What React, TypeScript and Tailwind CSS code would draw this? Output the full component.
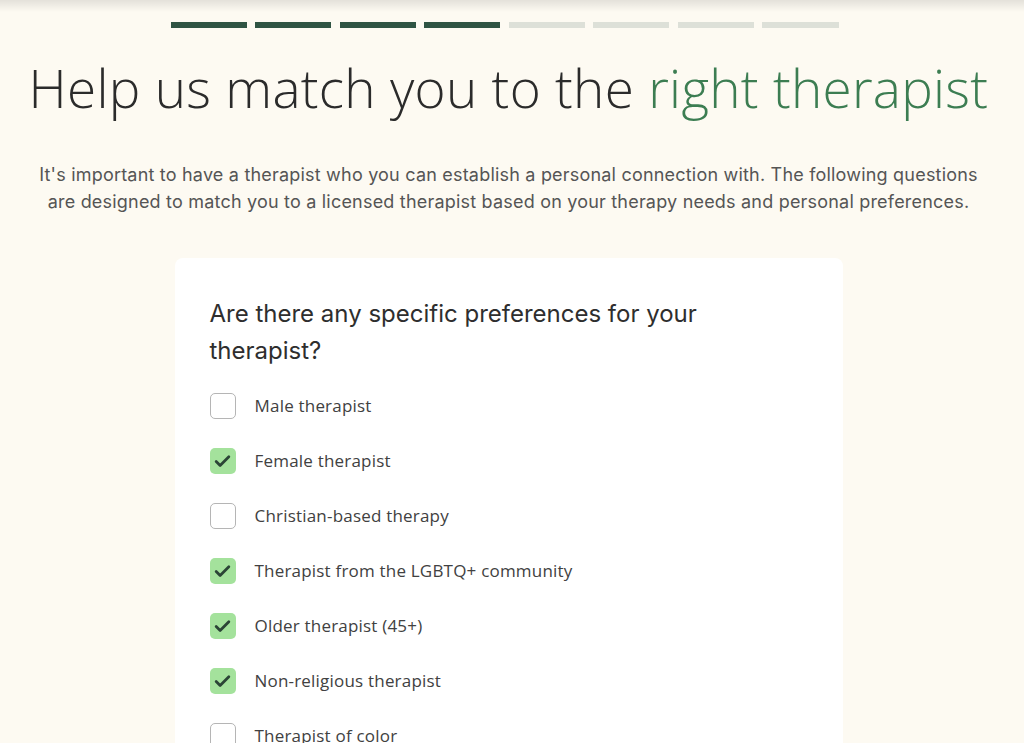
import React, { useState } from 'react';
import { Check } from 'lucide-react';

const options = [
  { label: 'Male therapist', checked: false },
  { label: 'Female therapist', checked: true },
  { label: 'Christian-based therapy', checked: false },
  { label: 'Therapist from the LGBTQ+ community', checked: true },
  { label: 'Older therapist (45+)', checked: true },
  { label: 'Non-religious therapist', checked: true },
  { label: 'Therapist of color', checked: false },
];

const App = () => {
  const [selected, setSelected] = useState(options.map((o) => o.checked));
  const step = 4;

  return (
    <div className="h-screen bg-[#fdfaf2] relative overflow-hidden">
      {/* header shadow */}
      <div className="absolute inset-x-0 top-0 h-3 bg-gradient-to-b from-black/10 to-transparent" />

      <div className="w-[1017px] flex flex-col items-center pt-[22px]">
        {/* Progress */}
        <div className="flex gap-[8.5px] w-[668px] -ml-[8px]">
          {Array.from({ length: 8 }).map((_, i) => (
            <div
              key={i}
              className={`flex-1 h-[6px] ${i < step ? 'bg-[#2f5443]' : 'bg-[#dde0d8]'}`}
            />
          ))}
        </div>

        <h1 className="mt-[28px] text-[53px] leading-[64px] font-light text-[#2b2b2b] tracking-[0.3px] font-['Open_Sans',sans-serif]">
          Help us match you to the <span className="text-[#3c7d52]">right therapist</span>
        </h1>

        <p className="mt-[41px] w-[940px] text-center text-[18px] leading-[27px] tracking-[0.2px] text-[#555555] font-['Inter',sans-serif]">
          It's important to have a therapist who you can establish a personal connection with. The following questions are designed to match you to a licensed therapist based on your therapy needs and personal preferences.
        </p>

        <div className="mt-[43px] w-[668px] bg-white rounded-lg px-[35px] pt-[37px] pb-10">
          <h2 className="text-[24px] leading-[37px] text-[#2e2e2e] font-['Inter',sans-serif] w-[540px]">
            Are there any specific preferences for your therapist?
          </h2>

          <div className="mt-[24px] flex flex-col gap-[29px]">
            {options.map((o, i) => (
              <label key={o.label} className="flex items-center gap-[19px] cursor-pointer">
                <button
                  type="button"
                  onClick={() => setSelected((s) => s.map((v, j) => (j === i ? !v : v)))}
                  className={`w-[26px] h-[26px] rounded-[5px] flex items-center justify-center shrink-0 ${
                    selected[i] ? 'bg-[#a4e29c]' : 'bg-white border border-[#b5b5b5]'
                  }`}
                >
                  {selected[i] && <Check size={19} strokeWidth={3.5} className="text-[#2b4536]" />}
                </button>
                <span className="text-[17px] text-[#414141] font-['Open_Sans',sans-serif] tracking-[0.2px]">{o.label}</span>
              </label>
            ))}
          </div>
        </div>
      </div>
    </div>
  );
};

export default App;
